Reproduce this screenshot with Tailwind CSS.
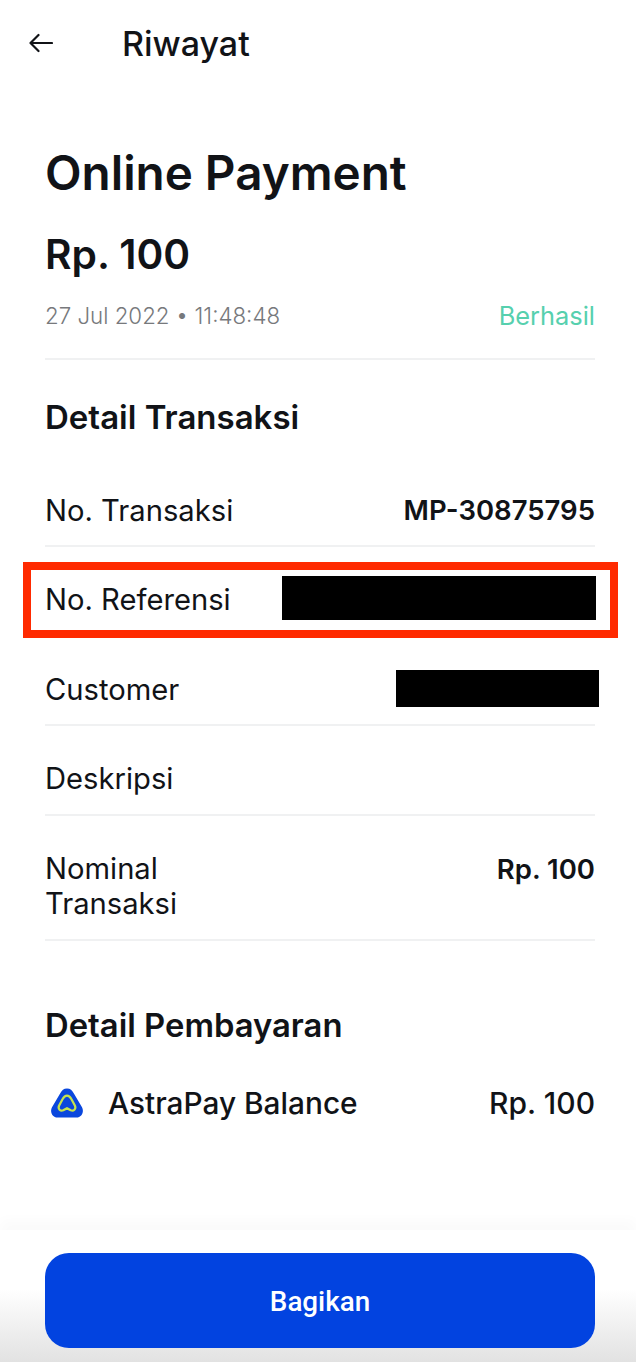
<!DOCTYPE html><html lang="en">
  <head>
    <meta charset="UTF-8" />
    <meta name="viewport" content="width=device-width, initial-scale=1.0" />
    <title>Riwayat</title>
    <script src="https://cdn.jsdelivr.net/npm/@tailwindcss/browser@4"></script>
  </head>
  <body class="bg-white font-['Inter',sans-serif] text-[#111317]">
    <div class="relative w-[636px] h-[1362px] overflow-hidden flex flex-col">
      <!-- header -->
      <div class="h-[88px] flex items-center pl-[29px] gap-[69px] shrink-0">
        <svg width="24" height="20" viewBox="0 0 24 20" fill="none" stroke="#111317" stroke-width="2.2" stroke-linecap="round" stroke-linejoin="round" class="mt-[-3px]">
          <path d="M1.5 10H23M9.5 2L1.5 10L9.5 18" />
        </svg>
        <h2 class="text-[34px] leading-[40px] font-medium">Riwayat</h2>
      </div>

      <div class="flex-1 pl-[45px] pr-[41px]">
        <h1 class="mt-[52px] text-[47.6px] leading-[66px] font-semibold">Online Payment</h1>
        <div class="mt-[24px] text-[40.7px] leading-[50px] font-semibold">Rp. 100</div>
        <div class="mt-[15px] flex justify-between items-center h-[44px] pb-[2px] text-[22.3px] font-light">
          <span class="text-[#77797c]">27 Jul 2022 • 11:48:48</span>
          <span class="text-[25.4px] font-normal text-[#56d0ae]">Berhasil</span>
        </div>
        <div class="mt-[19px] border-t-2 border-[#f0f1f2]"></div>

        <h3 class="mt-[37px] text-[33px] leading-[40px] font-semibold">Detail Transaksi</h3>

        <div class="mt-[56px] text-[29.2px] leading-[35px]">
          <div class="flex justify-between h-[54px] border-b-2 border-[#f0f1f2]">
            <span>No. Transaksi</span>
            <span class="font-semibold text-[27.5px]">MP-30875795</span>
          </div>
          <div class="h-[90px] pt-[35px] border-b-2 border-[#f0f1f2]">
            <span>No. Referensi</span>
          </div>
          <div class="h-[89px] pt-[35px] border-b-2 border-[#f0f1f2]">
            <span>Customer</span>
          </div>
          <div class="h-[90px] pt-[35px] border-b-2 border-[#f0f1f2]">
            <span>Deskripsi</span>
          </div>
          <div class="flex justify-between h-[125px] pt-[35px] border-b-2 border-[#f0f1f2]">
            <span class="w-[180px]">Nominal Transaksi</span>
            <span class="font-semibold text-[27.5px] pt-[1px]">Rp. 100</span>
          </div>
        </div>

        <h3 class="mt-[64px] text-[32.8px] leading-[40px] font-semibold">Detail Pembayaran</h3>
        <div class="mt-[38px] flex items-center text-[29.8px] leading-[40px] font-medium">
          <svg width="34" height="30" viewBox="0 0 36 32" class="ml-[5px] mr-[24px]">
            <path d="M18 .5C21.5 .5 23.5 2.5 25.5 6L34 20.5C36.5 25 34 31.5 28 31.5H8C2 31.5 -.5 25 2 20.5L10.5 6C12.5 2.5 14.5 .5 18 .5Z" fill="#0a47dd" />
            <path d="M18 8C20.5 8 21.5 9.5 22.5 11.5L26.5 19C28 22.5 25 25 22 23.8L18 21.5L14 23.8C11 25 8 22.5 9.5 19L13.5 11.5C14.5 9.5 15.5 8 18 8Z" fill="none" stroke="#c6e34f" stroke-width="2.4" stroke-linejoin="round" />
          </svg>
          <span class="flex-1">AstraPay Balance</span>
          <span class="text-[30px]">Rp. 100</span>
        </div>
      </div>

      <!-- bottom bar -->
      <div class="relative h-[132px] shrink-0 pl-[45px] pr-[41px] pt-[23px] bg-linear-to-b from-white from-45% to-[#e2e2e2] shadow-[0_-10px_12px_rgba(0,0,0,0.02)]">
        <button class="w-full h-[95px] pt-[3px] rounded-[24px] bg-[#0243e0] text-white font-['Roboto',sans-serif] text-[27.8px] font-medium">Bagikan</button>
      </div>

      <!-- redaction overlays drawn on top of the capture -->
      <div class="absolute left-[282px] top-[576px] w-[314px] h-[44px] bg-black"></div>
      <div class="absolute left-[396px] top-[670px] w-[203px] h-[37px] bg-black"></div>
      <div class="absolute left-[23px] top-[562px] w-[595px] h-[76px] border-[8px] border-[#ff2a00]"></div>
    </div>
  </body>
</html>
